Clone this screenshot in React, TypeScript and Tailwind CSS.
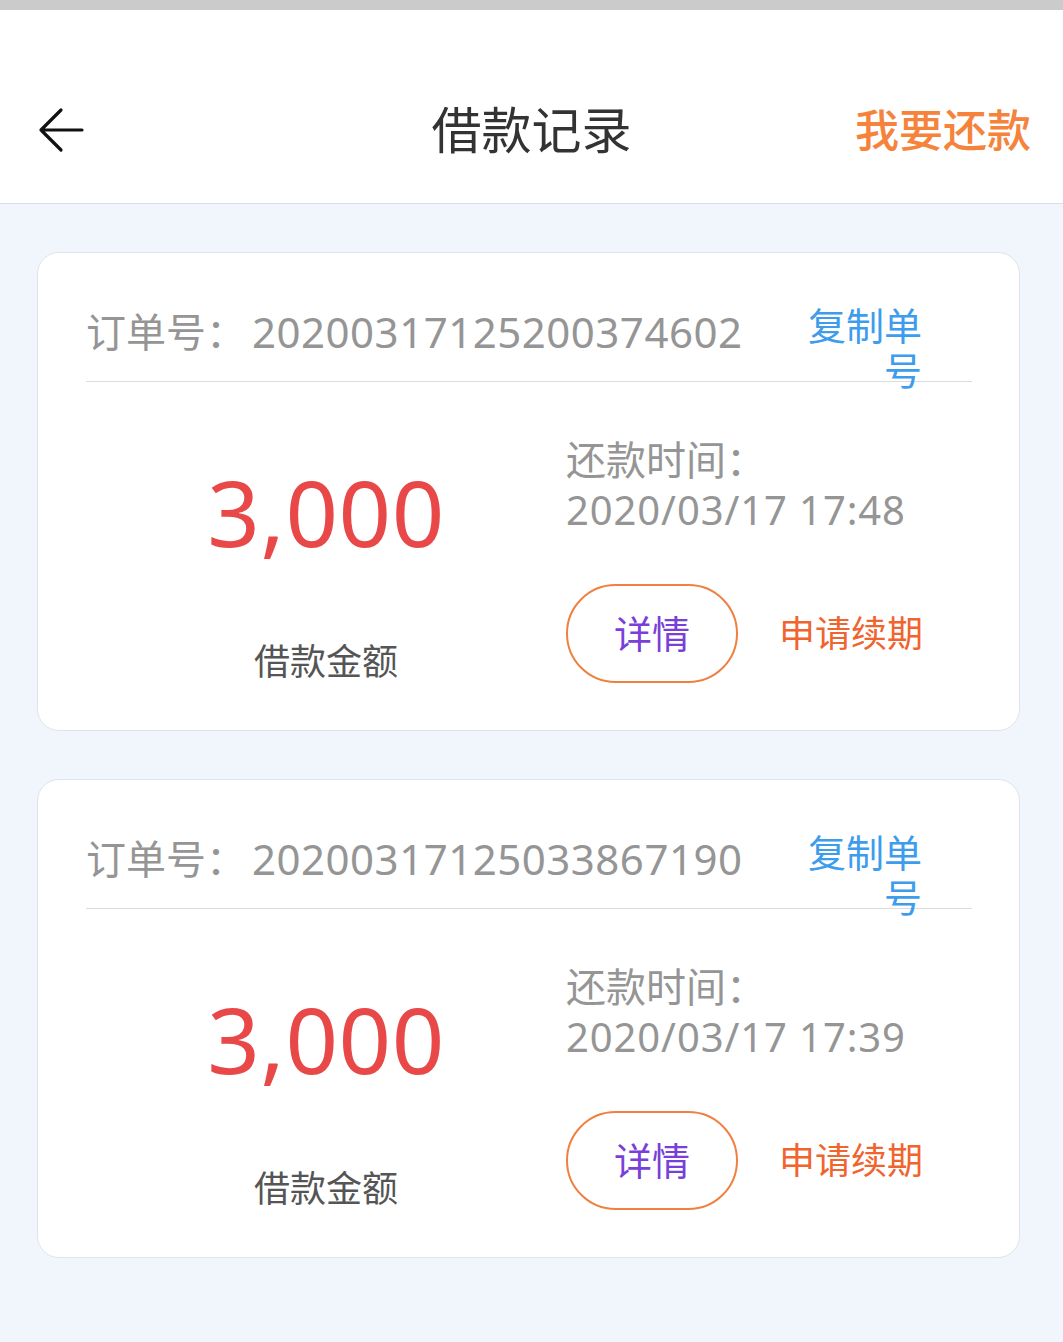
import React from "react";

const FONT = { fontFamily: '"Noto Sans", "Noto Sans CJK SC", sans-serif' };

function BackArrow() {
  return (
    <svg width="46" height="46" viewBox="0 0 46 46" fill="none">
      <path d="M44 23H3M23 3L3 23l20 20" stroke="#111" strokeWidth="3.2" strokeLinecap="round" strokeLinejoin="round" />
    </svg>
  );
}

function Card({ order, time }: { order: string; time: string }) {
  return (
    <div className="bg-white rounded-[22px] border border-[#dfe4ec] h-[479px] pl-[48px] pr-[47px] flex flex-col">
      <div className="h-[129px] shrink-0 flex items-start justify-between pt-[54px] border-b border-[#dcdcdc]">
        <div className="flex items-center h-[50px] text-[#959595] leading-[50px]">
          <span className="text-[40px]">订单号：</span>
          <span className="text-[42px] tracking-[0.5px] ml-[6px]">{order}</span>
        </div>
        <div className="w-[116px] text-right text-[38px] leading-[45px] text-[#3d9cec] mr-[50px] -mt-[4px]">
          复制单号
        </div>
      </div>
      <div className="flex flex-1">
        <div className="w-[480px] shrink-0 flex flex-col items-center">
          <div className="text-[92px] leading-[92px] text-[#e84848] mt-[84px] tracking-[0.5px]">3,000</div>
          <div className="text-[36px] leading-[40px] text-[#555] mt-[84px]">借款金额</div>
        </div>
        <div className="flex flex-col">
          <div className="text-[40px] leading-[50px] text-[#959595] mt-[53px]">还款时间：</div>
          <div className="text-[40px] leading-[50px] text-[#959595] tracking-[0.9px]">{time}</div>
          <div className="flex items-center mt-[49px]">
            <div className="w-[172px] h-[99px] rounded-full border-[2.5px] border-[#f08040] flex items-center justify-center text-[38px] text-[#7a3fd8]">
              详情
            </div>
            <div className="ml-[41px] text-[36px] text-[#f0642e]">申请续期</div>
          </div>
        </div>
      </div>
    </div>
  );
}

export default function App() {
  return (
    <div className="w-[1063px] h-[1342px] bg-[#f1f5fc] flex flex-col overflow-hidden" style={FONT}>
      <div className="h-[10px] bg-[#cbcbcb] shrink-0" />
      <div className="h-[194px] bg-white border-b border-[#d9dee6] shrink-0 flex flex-col justify-end">
        <div className="h-[124px] mb-[11px] flex items-center justify-between px-[38px] relative">
          <BackArrow />
          <div className="absolute left-0 right-0 text-center text-[50px] text-[#333] pointer-events-none">借款记录</div>
          <div className="text-[44px] text-[#f5833b] font-medium mr-[-6px]">我要还款</div>
        </div>
      </div>
      <div className="flex flex-col gap-[48px] pl-[37px] pr-[43px] pt-[48px]">
        <Card order="20200317125200374602" time="2020/03/17 17:48" />
        <Card order="20200317125033867190" time="2020/03/17 17:39" />
      </div>
    </div>
  );
}
